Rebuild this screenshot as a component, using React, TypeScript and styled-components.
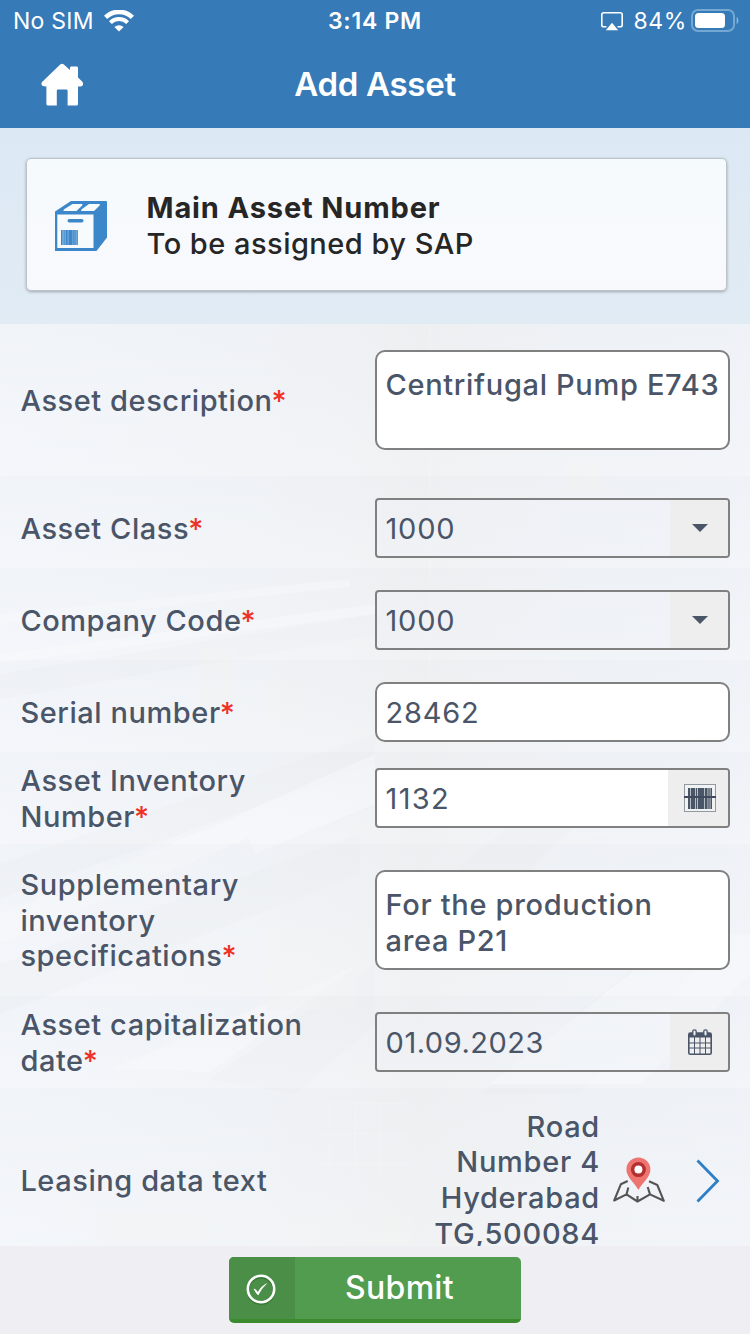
import React from "react";
import styled, { createGlobalStyle, css } from "styled-components";

const GlobalStyle = createGlobalStyle`
  *, *::before, *::after { box-sizing: border-box; }
  body { margin: 0; font-family: Inter, "Liberation Sans", sans-serif; color: #4a5568; }
  svg { display: block; flex: none; }
`;

const Screen = styled.div`
  width: 750px;
  height: 1334px;
  display: flex;
  flex-direction: column;
  overflow: hidden;
  background: #f1f3f7;
`;

const TopBar = styled.header`
  height: 128px;
  flex: none;
  background: #367ab7;
  color: #fff;
`;

const StatusBar = styled.div`
  height: 41px;
  padding: 1px 11px 0 13px;
  display: grid;
  grid-template-columns: 1fr auto 1fr;
  align-items: center;
  font-size: 23px;
  line-height: 40px;
`;

const StatusGroup = styled.div<{ $end?: boolean }>`
  display: flex;
  align-items: center;
  gap: ${(p) => (p.$end ? 0 : 10)}px;
  justify-content: ${(p) => (p.$end ? "flex-end" : "flex-start")};
`;

const StatusText = styled.span`
  letter-spacing: 0.25px;
  white-space: nowrap;
`;

const Clock = styled(StatusText)`
  padding-right: 2px;
  font-weight: 600;
  letter-spacing: 0.75px;
`;

const BatteryLevel = styled(StatusText)`
  margin: 0 4px 0 11px;
  letter-spacing: 0.6px;
`;

const NavBar = styled.div`
  height: 87px;
  display: grid;
  grid-template-columns: 124px 1fr 124px;
  align-items: center;
  padding-bottom: 1px;
`;

const HomeButton = styled.div`
  padding: 1px 0 0 40px;
`;

const Title = styled.h1`
  margin: 0;
  padding-bottom: 1px;
  text-align: center;
  font-size: 33px;
  font-weight: 600;
  line-height: 40px;
  letter-spacing: -0.3px;
`;

const Summary = styled.section`
  height: 196px;
  flex: none;
  padding: 30px 23px 33px 26px;
  background: linear-gradient(180deg, #dce8f4 0%, #dfeaf4 60%, #e1ebf4 100%);
`;

const Card = styled.div`
  height: 133px;
  display: flex;
  align-items: center;
  gap: 39.5px;
  padding: 2px 28px 0;
  border: 1px solid #bcc4ca;
  border-radius: 5px;
  background: linear-gradient(180deg, #f5fafd, #f9f9fd);
  box-shadow: 0 1px 3px rgba(70, 80, 90, 0.45);
`;

const CardText = styled.div`
  display: flex;
  flex-direction: column;
  color: #262626;
  font-size: 29px;
  line-height: 36px;
`;

const CardHeading = styled.strong`
  font-weight: 700;
  letter-spacing: 0.87px;
`;

const CardNote = styled.span`
  font-weight: 500;
  letter-spacing: 0.48px;
`;

const Form = styled.main`
  position: relative;
  flex: 1;
  min-height: 0;
  overflow: hidden;
`;

const Backdrop = styled.svg`
  position: absolute;
  inset: 0;
`;

const Row = styled.div<{ $height: number; $top: number; $bottom: number }>`
  position: relative;
  height: ${(p) => p.$height}px;
  padding: ${(p) => p.$top}px 20px ${(p) => p.$bottom}px 20.4px;
  display: grid;
  grid-template-columns: 354.6px 355px;
  align-items: center;
  background: linear-gradient(180deg, rgba(228, 231, 236, 0.12), rgba(255, 255, 255, 0.15));
`;

const Label = styled.label`
  max-width: 300px;
  padding-top: 1px;
  font-size: 29px;
  font-weight: 500;
  line-height: 35.4px;
  letter-spacing: 0.56px;
`;

const Required = styled.span`
  margin-left: -1px;
  color: #ee3124;
  letter-spacing: 0;
`;

const frame = css`
  border: 2px solid #808080;
  color: #4a5568;
  font-size: 29px;
`;

const TextArea = styled.div`
  ${frame}
  height: 100px;
  padding: 15px 0 0 8.5px;
  border-radius: 10px;
  background: #fff;
  font-weight: 500;
  line-height: 36px;
  letter-spacing: 0.68px;
  white-space: nowrap;
`;

const Field = styled.div<{ $filled?: boolean; $round?: boolean }>`
  ${frame}
  height: 60px;
  display: flex;
  overflow: hidden;
  border-radius: ${(p) => (p.$round ? 10 : 4)}px;
  background: ${(p) => (p.$filled ? "#fff" : "rgba(240, 243, 247, 0.3)")};
`;

const Value = styled.span<{ $spacing?: number }>`
  flex: 1;
  padding-left: 8.6px;
  line-height: 58px;
  letter-spacing: ${(p) => p.$spacing ?? 0.75}px;
`;

const Addon = styled.span<{ $wide?: boolean }>`
  width: ${(p) => (p.$wide ? 60 : 58)}px;
  padding-left: ${(p) => (p.$wide ? 4 : 2)}px;
  display: flex;
  align-items: center;
  justify-content: center;
  background: #eeeeee;
`;

const Location = styled.div`
  display: flex;
  align-items: center;
`;

const Address = styled.div`
  width: 225px;
  padding-left: 50px;
  text-align: right;
  font-size: 29px;
  font-weight: 500;
  line-height: 35.7px;
  letter-spacing: 0.7px;
`;

const MapSlot = styled.div`
  margin-left: 13px;
  width: 52px;
`;

const ChevronSlot = styled.div`
  margin-left: 30px;
  padding-top: 1px;
`;

const Footer = styled.footer`
  height: 88px;
  flex: none;
  display: flex;
  justify-content: center;
  padding-top: 11px;
  background: #eeeef3;
`;

const SubmitButton = styled.button`
  width: 292px;
  height: 66px;
  padding: 0;
  display: flex;
  overflow: hidden;
  border: 0;
  border-bottom: 4px solid #3b8a2d;
  border-radius: 5px;
  background: #529c4f;
  color: #fff;
  font: 500 32px/61px Inter, sans-serif;
`;

const SubmitIcon = styled.span`
  width: 66px;
  height: 62px;
  display: flex;
  align-items: center;
  justify-content: center;
  padding: 4px 2px 0 0;
  background: #4a8e47;
`;

const SubmitText = styled.span`
  flex: 1;
  padding-right: 17px;
  letter-spacing: 0.3px;
`;

const WifiIcon = () => (
  <svg width="30" height="22" viewBox="0 0 30 22" fill="none" stroke="#fff">
    <path d="M1.600 7.400a19 19 0 0 1 26.800 0" strokeWidth="4.600" />
    <path d="M6.400 12.600a12.200 12.200 0 0 1 17.200 0" strokeWidth="4" />
    <path d="M15 21.500l-4.600-4.400a6.400 6.400 0 0 1 9.200 0z" fill="#fff" stroke="none" />
  </svg>
);

const AirplayIcon = () => (
  <svg width="22" height="19" viewBox="0 0 22 19">
    <path
      d="M5.500 14.700H2.600A1.800 1.800 0 0 1 .8 12.900V2.600A1.800 1.800 0 0 1 2.600.8h16.800a1.800 1.800 0 0 1 1.800 1.800v10.300a1.800 1.800 0 0 1-1.800 1.800H16.500"
      fill="none"
      stroke="#fff"
      strokeWidth="1.600"
    />
    <path d="M11 10.800l6.200 7.400H4.800z" fill="#fff" />
  </svg>
);

const BatteryIcon = () => (
  <svg width="48" height="24" viewBox="0 0 48 24">
    <rect x="1" y="1" width="42" height="21" rx="6" fill="none" stroke="#74a8d2" strokeWidth="2" />
    <rect x="4" y="4" width="30" height="15" rx="3.500" fill="#fff" />
    <path d="M45.600 8c2.400 1.200 2.400 6 0 7.200z" fill="#8ab6da" />
  </svg>
);

const HomeIcon = () => (
  <svg width="44" height="44" viewBox="0 0 44 44" fill="#fff">
    <path d="M20.200 1.600c1.200-1 2.400-1 3.600 0l6.200 5.500V5q0-1.400 1.400-1.400h5.200Q38 3.600 38 5v9.400l4.400 4.400q1.600 2.800-.4 4.200-.8.600-4 .600V41q0 1.600-1.600 1.600h-8.800V27.800q0-1.200-1.200-1.200h-8.400q-1.200 0-1.200 1.200v14.800H8Q6.400 42.600 6.400 41V23.600q-3.200 0-4.200-.8-1.600-1.200-.4-3.600z" />
  </svg>
);

const BoxIcon = () => (
  <svg width="52" height="50" viewBox="0 0 52 50">
    <path d="M16 0h35q1 0 1 1v35.500L41.500 50H0V10.500z" fill="#3b87c9" />
    <path d="M17.500 3h9.800q.4.900-.4 1.800L21.500 10H8.500q-.4-1 1-2z" fill="#f8fbfe" />
    <path d="M34 3H45q-.2 1.600-1.400 2.600L39 10H26.200q-.3-1 .8-2z" fill="#f8fbfe" />
    <path d="M2.300 13.500h36.200V47H2.300z" fill="#f8fbfe" />
    <rect x="12.500" y="18" width="16" height="3.400" rx="1.700" fill="#3b87c9" />
    <path d="M6 29h1.500v15H6zM8.500 29h1.200v15H8.500zM10.500 29h2.200v15h-2.200zM13.400 29h4.200v15h-4.200zM18.200 29h1.500v15h-1.500zM20.300 29h1v15h-1zM21.800 29h.9v15h-.9z" fill="#3b87c9" />
    <path d="M6 29h17v15H6z" fill="#3b87c9" opacity=".45" />
  </svg>
);

const CaretIcon = () => (
  <svg width="16" height="8" viewBox="0 0 16 8">
    <path d="M0 0h16L8 8z" fill="#4a5568" />
  </svg>
);

const BarcodeIcon = () => (
  <svg width="32" height="28" viewBox="0 0 32 28">
    <rect x=".5" y=".5" width="31" height="27" fill="#f1f2f3" stroke="#9299a1" />
    <path d="M4 4h2v21H4zM7 4h4v21H7zM12 4h1v21h-1zM14 4h6v21h-6zM21 4h2.400v21H21zM24.400 4h1.200v21h-1.200zM26.600 4h1.400v21h-1.400z" fill="#4a5568" />
    <path d="M4 4h24v21H4z" fill="#4a5568" opacity=".35" />
    <path d="M0 12h32v2H0z" fill="#3f4a60" />
  </svg>
);

const CalendarIcon = () => (
  <svg width="24" height="26" viewBox="0 0 24 26" fill="none" stroke="#4a5568">
    <rect x=".8" y="4" width="22.400" height="21.200" rx="1.500" strokeWidth="1.600" />
    <path d="M1 4h22v4.500H1z" fill="#4a5568" stroke="none" />
    <path d="M6.500 8v17M12 8v17M17.500 8v17M1 14h22M1 19h22" strokeWidth="1" />
    <rect x="4.800" y=".8" width="3.400" height="6.400" rx="1.600" fill="#eee" strokeWidth="1.300" />
    <rect x="15.800" y=".8" width="3.400" height="6.400" rx="1.600" fill="#eee" strokeWidth="1.300" />
  </svg>
);

const MapPinIcon = () => (
  <svg width="52" height="47" viewBox="0 0 52 47">
    <path
      d="M14.700 24L7.800 27.300 1.200 43.500 13.500 37.400 24.500 44.500 37 37.400 50.800 43.800 44.300 28 36 24.300M15.300 30.500L13.500 37.400M24.500 39v5.500M34.700 30l2.300 7.400"
      fill="none"
      stroke="#555"
      strokeWidth="2.100"
      strokeLinejoin="round"
    />
    <path d="M25.400 33C22 26 13.400 20.500 13.400 12.500a12 12 0 0 1 24 0C37.400 20.500 29 26 25.400 33z" fill="#ee7471" />
    <circle cx="25.400" cy="12.600" r="7.500" fill="#b3302f" />
    <circle cx="25.400" cy="12.600" r="4" fill="#fff" />
  </svg>
);

const ChevronIcon = () => (
  <svg width="26" height="44" viewBox="0 0 26 44" fill="none" stroke="#2f7fc7" strokeWidth="2.800">
    <path d="M2.500 1.500L22.500 22 2.500 42.500" />
  </svg>
);

const CheckIcon = () => (
  <svg width="30" height="32" viewBox="0 0 30 32" fill="none">
    <circle cx="15" cy="16.500" r="13.200" stroke="#3a7a37" strokeWidth="2.800" />
    <circle cx="15" cy="15" r="13.200" stroke="#fff" strokeWidth="2.600" />
    <path d="M7.500 14.800q2.200-.4 4.300 3.200Q15.500 11.500 21.500 9q-5.500 5-9.200 12.200-1.400-.2-4.800-6.400z" fill="#fff" />
  </svg>
);

const WarehouseArt = () => (
  <Backdrop width="750" height="922" viewBox="0 0 750 922">
    <defs>
      <linearGradient id="haze" x1="0" y1="0" x2="1" y2="0">
        <stop offset="0" stopColor="#f2f5fa" />
        <stop offset=".35" stopColor="#f0f3f7" />
        <stop offset=".56" stopColor="#eff0f1" />
        <stop offset=".75" stopColor="#eff2f6" />
        <stop offset="1" stopColor="#f0f3f8" />
      </linearGradient>
    </defs>
    <rect width="750" height="922" fill="url(#haze)" />
    <g fill="#e8ebef" opacity=".32">
      <path d="M0 350l380-60v20L0 375zM0 540L375 410v30L0 575zM0 640l360-130v40L0 690zM210 755L375 640v60l-80 70zM390 600l170-140h60L430 640zM480 770l170-140h60L580 770z" />
    </g>
    <g fill="#f8f9fc" opacity=".5">
      <path d="M0 290l350-35v8L0 300zM0 330l375-50v10L0 340zM240 490l135-60v50l-120 50zM0 590l340-140v25L0 620zM110 745L360 640l-150 108zM490 760l190-150h70v40L640 760z" />
    </g>
    <g fill="#f3f3f0" opacity=".4">
      <path d="M267 604h88v82h-88zM98 890h110v32H98zM290 890h120v32H290zM200 325h36v60h-36zM267 355h38v40h-38zM565 140h38v28h-38z" />
    </g>
    <g stroke="#f5f6f9" opacity=".6" fill="none">
      <path d="M320 780h90M320 810h90M320 840h90M330 780v70M355 780v70M380 780v70M680 785h70M680 815h70M680 845h70M700 780v80M725 780v80M430 0v380M648 200v120M590 510h60M590 530h60M610 500v60" />
    </g>
  </Backdrop>
);

type RowProps = {
  label: string;
  required?: boolean;
  height?: number;
  top?: number;
  bottom?: number;
  children: React.ReactNode;
};

const FormRow = ({ label, required = true, height = 92, top = 22, bottom = 10, children }: RowProps) => (
  <Row $height={height} $top={top} $bottom={bottom}>
    <Label>
      {label}
      {required && <Required>*</Required>}
    </Label>
    {children}
  </Row>
);

export default function App() {
  return (
    <Screen>
      <GlobalStyle />
      <TopBar>
        <StatusBar>
          <StatusGroup>
            <StatusText>No SIM</StatusText>
            <WifiIcon />
          </StatusGroup>
          <Clock>3:14 PM</Clock>
          <StatusGroup $end>
            <AirplayIcon />
            <BatteryLevel>84%</BatteryLevel>
            <BatteryIcon />
          </StatusGroup>
        </StatusBar>
        <NavBar>
          <HomeButton><HomeIcon /></HomeButton>
          <Title>Add Asset</Title>
        </NavBar>
      </TopBar>

      <Summary>
        <Card>
          <BoxIcon />
          <CardText>
            <CardHeading>Main Asset Number</CardHeading>
            <CardNote>To be assigned by SAP</CardNote>
          </CardText>
        </Card>
      </Summary>

      <Form>
        <WarehouseArt />
        <FormRow label="Asset description" height={152} top={26} bottom={26}>
          <TextArea>Centrifugal Pump E743</TextArea>
        </FormRow>
        <FormRow label="Asset Class">
          <Field><Value>1000</Value><Addon><CaretIcon /></Addon></Field>
        </FormRow>
        <FormRow label="Company Code">
          <Field><Value>1000</Value><Addon><CaretIcon /></Addon></Field>
        </FormRow>
        <FormRow label="Serial number">
          <Field $filled $round><Value>28462</Value></Field>
        </FormRow>
        <FormRow label="Asset Inventory Number" top={10} bottom={10}>
          <Field $filled><Value $spacing={1.3}>1132</Value><Addon $wide><BarcodeIcon /></Addon></Field>
        </FormRow>
        <FormRow label="Supplementary inventory specifications" height={152} top={20} bottom={20}>
          <TextArea>For the production<br />area P21</TextArea>
        </FormRow>
        <FormRow label="Asset capitalization date" top={10} bottom={10}>
          <Field><Value $spacing={0.52}>01.09.2023</Value><Addon><CalendarIcon /></Addon></Field>
        </FormRow>
        <FormRow label="Leasing data text" required={false} height={184} top={20} bottom={20}>
          <Location>
            <Address>Road<br />Number 4<br />Hyderabad<br />TG,500084</Address>
            <MapSlot><MapPinIcon /></MapSlot>
            <ChevronSlot><ChevronIcon /></ChevronSlot>
          </Location>
        </FormRow>
      </Form>

      <Footer>
        <SubmitButton>
          <SubmitIcon><CheckIcon /></SubmitIcon>
          <SubmitText>Submit</SubmitText>
        </SubmitButton>
      </Footer>
    </Screen>
  );
}
